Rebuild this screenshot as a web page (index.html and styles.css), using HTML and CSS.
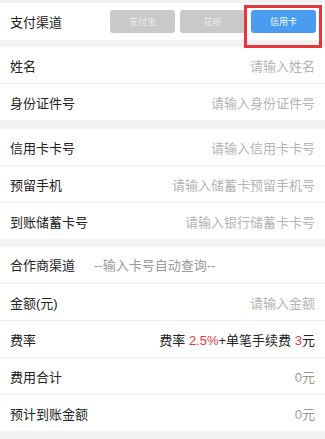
FILE: index.html
```html
<!DOCTYPE html>
<html lang="zh-CN">
<head>
<meta charset="utf-8">
<title>支付</title>
<link rel="stylesheet" href="styles.css">
</head>
<body>
<div class="page">
  <section class="group g1">
    <div class="row channel-row">
      <span class="label">支付渠道</span>
      <div class="channels">
        <span class="chip">支付宝</span>
        <span class="chip">花呗</span>
        <span class="chip-wrap">
          <span class="chip active">信用卡</span>
          <span class="highlight"></span>
        </span>
      </div>
    </div>
  </section>

  <section class="group g2">
    <div class="row"><span class="label">姓名</span><span class="ph">请输入姓名</span></div>
    <div class="row"><span class="label">身份证件号</span><span class="ph">请输入身份证件号</span></div>
  </section>

  <section class="group g3">
    <div class="row"><span class="label">信用卡卡号</span><span class="ph">请输入信用卡卡号</span></div>
    <div class="row"><span class="label">预留手机</span><span class="ph">请输入储蓄卡预留手机号</span></div>
    <div class="row"><span class="label">到账储蓄卡号</span><span class="ph">请输入银行储蓄卡卡号</span></div>
  </section>

  <section class="group g4">
    <div class="row partner"><span class="label">合作商渠道</span><span class="hint">--输入卡号自动查询--</span></div>
    <div class="row"><span class="label">金额(元)</span><span class="ph">请输入金额</span></div>
    <div class="row"><span class="label">费率</span><span class="val">费率 <em>2.5%</em>+单笔手续费 <em>3</em>元</span></div>
    <div class="row"><span class="label">费用合计</span><span class="val light">0元</span></div>
    <div class="row"><span class="label">预计到账金额</span><span class="val light">0元</span></div>
  </section>
</div>
</body>
</html>
```

FILE: styles.css
```css
* { box-sizing: border-box; }
html, body {
  margin: 0;
  padding: 0;
  background: #f2f2f2;
}
body {
  font-family: "Liberation Sans", "Noto Sans CJK SC", sans-serif;
  font-size: 13px;
  color: #222;
}
.page {
  padding-top: 3px;
  display: flex;
  flex-direction: column;
}
.group {
  background: #fff;
  display: flex;
  flex-direction: column;
}
.g1 { margin-bottom: 7px; }
.g2 { margin-bottom: 9px; }
.g3 { margin-bottom: 8px; }
.row {
  height: 37px;
  padding: 0 10px;
  display: flex;
  align-items: center;
  justify-content: space-between;
  border-bottom: 1px solid #ededed;
  white-space: nowrap;
}
.row:last-child { border-bottom: none; height: 36px; }
.g1 .row { height: 37px; }
.partner {
  justify-content: flex-start;
  height: 37px;
  border-bottom: 2px solid #f5f5f5;
}
.label { color: #222; }
.ph { color: #b4b4b4; }
.hint { color: #999; margin-left: 19px; }
.val { color: #222; }
.val.light { color: #999; }
.val em { font-style: normal; color: #e0383e; }

.channel-row { padding-right: 9px; }
.channels {
  display: flex;
  gap: 5px;
  align-items: center;
}
.chip {
  display: flex;
  align-items: center;
  justify-content: center;
  width: 65px;
  height: 23px;
  border-radius: 3px;
  background: #c9c9c9;
  color: #e9e9e9;
  font-size: 9px;
}
.chip-wrap {
  position: relative;
  margin-left: 1px;
  display: flex;
}
.chip.active {
  background: #4a9cf0;
  color: #fff;
}
.highlight {
  position: absolute;
  left: -7px;
  top: -5px;
  right: -6px;
  bottom: -15px;
  border: 3px solid #e8343a;
  pointer-events: none;
}
```
